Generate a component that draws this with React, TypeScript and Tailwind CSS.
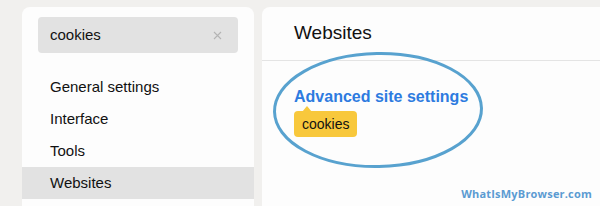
import React from 'react';

const menu = ['General settings', 'Interface', 'Tools', 'Websites'];

const App: React.FC = () => {
    return (
        <div
            className="relative w-[600px] h-[206px] overflow-hidden bg-[#f1f0ee] flex gap-2 pl-[22px] pt-[7px]"
            style={{ fontFamily: '"Liberation Sans", Arial, sans-serif' }}
        >
            {/* Sidebar */}
            <div className="w-[232px] h-[240px] shrink-0 bg-[#fdfdfd] rounded-t-lg pt-[10px]">
                <div className="mx-4 h-9 rounded bg-[#e2e2e2] flex items-center justify-between pl-3 pr-4">
                    <span className="text-[15px] text-[#111]">cookies</span>
                    <svg width="9" height="9" viewBox="0 0 9 9" className="text-[#b4b4b4]">
                        <path d="M1 1L8 8M8 1L1 8" stroke="currentColor" strokeWidth="1.1" />
                    </svg>
                </div>
                <div className="mt-[18px] flex flex-col">
                    {menu.map((item) => (
                        <div
                            key={item}
                            className={`h-8 flex items-center pl-7 text-[15px] text-[#111] ${
                                item === 'Websites' ? 'bg-[#e2e2e2]' : ''
                            }`}
                        >
                            {item}
                        </div>
                    ))}
                </div>
            </div>

            {/* Main panel */}
            <div className="relative flex-1 h-[240px] bg-[#fdfdfd] rounded-tl-lg">
                <div className="h-[54px] flex items-center px-8 border-b border-[#e4e4e4]">
                    <h1 className="text-[19px] text-[#111]">Websites</h1>
                </div>
                <div className="px-8 pt-[26px]">
                    <div className="text-[16px] font-bold text-[#2d7be0] leading-[20px]">
                        Advanced site settings
                    </div>
                    <div className="relative mt-[4px] inline-block">
                        <div className="absolute -top-[5px] left-[8px] w-0 h-0 border-l-[5px] border-r-[5px] border-b-[6px] border-l-transparent border-r-transparent border-b-[#f8c83c]" />
                        <div className="bg-[#f8c83c] rounded-sm px-2 h-[26px] flex items-center text-[14px] text-[#111]">
                            cookies
                        </div>
                    </div>
                </div>

                {/* Annotation ring */}
                <svg
                    className="absolute left-[10px] top-[43px] pointer-events-none"
                    width="212"
                    height="120"
                    viewBox="0 0 212 120"
                >
                    <ellipse
                        cx="106"
                        cy="60"
                        rx="103.5"
                        ry="56.5"
                        fill="none"
                        stroke="#58a2cf"
                        strokeWidth="3"
                        transform="rotate(-1 106 60)"
                    />
                </svg>
            </div>

            <div
                className="absolute right-[8px] bottom-[4px] text-[11px] font-bold text-[#5b9bd2] tracking-[0.2px]"
                style={{ fontFamily: '"Open Sans", "Liberation Sans", sans-serif' }}
            >
                WhatIsMyBrowser.com
            </div>
        </div>
    );
};

export default App;
